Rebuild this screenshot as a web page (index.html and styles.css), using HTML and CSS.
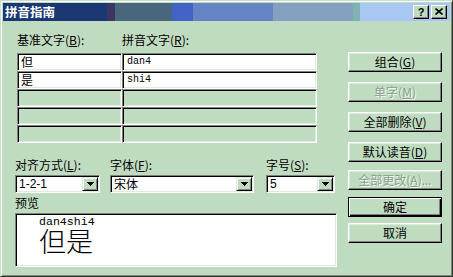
FILE: index.html
```html
<!DOCTYPE html>
<html lang="zh-CN">
<head>
<meta charset="utf-8">
<title>拼音指南</title>
<link rel="stylesheet" href="styles.css">
</head>
<body>
<div class="window">
  <div class="titlebar">
    <span class="title">拼音指南</span>
    <div class="tbtns">
      <span class="tbtn help">?</span>
      <span class="tbtn close"><svg width="8" height="7" viewBox="0 0 8 7"><path d="M0.5 0.5L7.5 6.5M7.5 0.5L0.5 6.5" stroke="#000" stroke-width="1.6" fill="none"/></svg></span>
    </div>
  </div>
  <div class="client">
    <div class="main">
      <div class="hdr">
        <span class="h1">基准文字(<u>B</u>):</span>
        <span class="h2">拼音文字(<u>R</u>):</span>
      </div>
      <div class="grid">
        <div class="cell base on">但</div><div class="cell py on">dan4</div>
        <div class="cell base on">是</div><div class="cell py on">shi4</div>
        <div class="cell base"></div><div class="cell py"></div>
        <div class="cell base"></div><div class="cell py"></div>
        <div class="cell base"></div><div class="cell py"></div>
      </div>
      <div class="opts">
        <div class="opt o-align">
          <div class="olabel">对齐方式(<u>L</u>):</div>
          <div class="combo"><span class="cval">1-2-1</span><span class="drop"><svg width="7" height="4" viewBox="0 0 7 4"><path d="M0 0H7L3.5 4Z" fill="#000"/></svg></span></div>
        </div>
        <div class="opt o-font">
          <div class="olabel">字体(<u>F</u>):</div>
          <div class="combo"><span class="cval">宋体</span><span class="drop"><svg width="7" height="4" viewBox="0 0 7 4"><path d="M0 0H7L3.5 4Z" fill="#000"/></svg></span></div>
        </div>
        <div class="opt o-size">
          <div class="olabel">字号(<u>S</u>):</div>
          <div class="combo"><span class="cval">5</span><span class="drop"><svg width="7" height="4" viewBox="0 0 7 4"><path d="M0 0H7L3.5 4Z" fill="#000"/></svg></span></div>
        </div>
      </div>
      <div class="plabel">预览</div>
      <div class="preview">
        <div class="ruby">dan4shi4</div>
        <div class="rbase">但是</div>
      </div>
    </div>
    <div class="buttons">
      <div class="btn b1">组合(<u>G</u>)</div>
      <div class="btn b2 disabled">单字(<u>M</u>)</div>
      <div class="btn b3">全部删除(<u>V</u>)</div>
      <div class="btn b4">默认读音(<u>D</u>)</div>
      <div class="btn b5 disabled">全部更改(<u>A</u>)...</div>
      <div class="btn b6 default">确定</div>
      <div class="btn b7">取消</div>
    </div>
  </div>
</div>
</body>
</html>
```
FILE: styles.css
```css
* { box-sizing: border-box; }
html, body { margin: 0; padding: 0; }
body {
  width: 453px;
  height: 277px;
  overflow: hidden;
  background: #c0dcc0;
  font-family: "Noto Sans CJK SC", "Noto Sans", sans-serif;
  font-size: 12px;
  color: #000;
}
u { text-decoration: underline; text-underline-offset: 1px; }

.window {
  width: 453px;
  height: 277px;
  background: #c0dcc0;
  border: 1px solid;
  border-color: #c8e0c8 #303030 #303030 #c8e0c8;
  box-shadow: inset 1px 1px #ffffff, inset -1px -1px #7c8c7c;
  padding: 2px;
  display: flex;
  flex-direction: column;
}

.titlebar {
  height: 18px;
  flex: none;
  display: flex;
  align-items: center;
  padding-left: 2px;
  padding-right: 3px;
  background: linear-gradient(to right,
    #1c3874 0, #1c3874 104px,
    #3a3562 104px, #3a3562 112px,
    #48667c 112px, #48667c 169px,
    #4262c6 169px, #4262c6 190px,
    #6684c4 190px, #6684c4 270px,
    #84a0c0 270px, #84a0c0 350px,
    #80b2b0 350px, #80b2b0 357px,
    #a8c8f2 357px, #a8c8f2 100%);
}
.title {
  color: #fff;
  font-weight: bold;
  font-size: 12.5px;
  line-height: 18px;
}
.tbtns {
  margin-left: auto;
  display: flex;
  gap: 2px;
  margin-top: -1px;
}
.tbtn {
  width: 16px;
  height: 14px;
  background: #c0dcc0;
  border: 1px solid;
  border-color: #fff #000 #000 #fff;
  box-shadow: inset -1px -1px #808080;
  display: flex;
  align-items: center;
  justify-content: center;
}
.tbtn.help {
  font-family: "Liberation Sans", sans-serif;
  font-weight: bold;
  font-size: 11px;
  line-height: 12px;
}
.tbtn svg { display: block; }

.client {
  flex: 1;
  display: flex;
  padding: 12px 0 0 12px;
}
.main {
  width: 322px;
  display: flex;
  flex-direction: column;
}

.hdr {
  height: 14px;
  line-height: 14px;
  padding-left: 2px;
  display: flex;
}
.h1 { width: 105px; }

.grid {
  margin-top: 6px;
  margin-left: 2px;
  display: grid;
  grid-template-columns: 105px 195px;
  grid-auto-rows: 18px;
}
.cell {
  border: 1px solid;
  border-color: #808080 #ffffff #ffffff #808080;
  box-shadow: inset 1px 1px #000, inset -1px -1px #dcecdc;
  background: #c0dcc0;
  line-height: 16px;
  white-space: nowrap;
  overflow: hidden;
}
.cell.on { background: #fff; }
.cell.base { padding-left: 3px; }
.cell.py {
  padding-left: 4px;
  font-family: "Liberation Mono", monospace;
  font-size: 10px;
}

.opts {
  margin-top: 15px;
  display: flex;
}
.opt { display: flex; flex-direction: column; }
.o-align { width: 85px; }
.o-font { width: 144px; margin-left: 10px; }
.o-size { width: 69px; margin-left: 12px; }
.olabel {
  height: 14px;
  line-height: 14px;
}
.combo {
  margin-top: 3px;
  height: 18px;
  border: 1px solid;
  border-color: #808080 #ffffff #ffffff #808080;
  box-shadow: inset 1px 1px #000, inset -1px -1px #dcecdc;
  background: #fff;
  display: flex;
  align-items: stretch;
  padding: 1px;
}
.cval {
  flex: 1;
  padding-left: 2px;
  line-height: 14px;
  font-family: "Liberation Sans", "Noto Sans CJK SC", sans-serif;
}
.o-font .cval { font-family: "Noto Sans CJK SC", sans-serif; }
.drop {
  width: 16px;
  background: #c0dcc0;
  border: 1px solid;
  border-color: #dcecdc #000 #000 #dcecdc;
  box-shadow: inset 1px 1px #fff, inset -1px -1px #808080;
  display: flex;
  align-items: center;
  justify-content: center;
}
.drop svg { display: block; shape-rendering: crispEdges; }

.plabel {
  margin-top: 3px;
  height: 14px;
  line-height: 14px;
}
.preview {
  margin-top: 3px;
  height: 54px;
  border: 1px solid;
  border-color: #808080 #ffffff #ffffff #808080;
  box-shadow: inset 1px 1px #000, inset -1px -1px #dcecdc;
  background: #fff;
  padding: 3px 0 0 23px;
}
.ruby {
  font-family: "Liberation Mono", monospace;
  font-size: 11.6px;
  line-height: 10px;
  height: 10px;
}
.rbase {
  font-size: 27px;
  line-height: 27px;
  font-weight: 300;
}

.buttons {
  margin-left: 11px;
  width: 94px;
  display: flex;
  flex-direction: column;
}
.btn {
  height: 20px;
  background: #c0dcc0;
  border: 1px solid;
  border-color: #ffffff #000 #000 #ffffff;
  box-shadow: inset -1px -1px #808080, inset 1px 1px #dcecdc;
  text-align: center;
  line-height: 18px;
}
.btn.disabled {
  color: #8a9e8a;
  text-shadow: 1px 1px #f4fbf4;
}
.btn.default {
  border-color: #000;
  box-shadow: inset 1px 1px #fff, inset -1px -1px #000, inset -2px -2px #808080;
}
.b1 { margin-top: 19px; }
.b2 { margin-top: 10px; }
.b3 { margin-top: 10px; }
.b4 { margin-top: 10px; }
.b5 { margin-top: 8px; }
.b6 { margin-top: 7px; }
.b7 { margin-top: 6px; }
```
